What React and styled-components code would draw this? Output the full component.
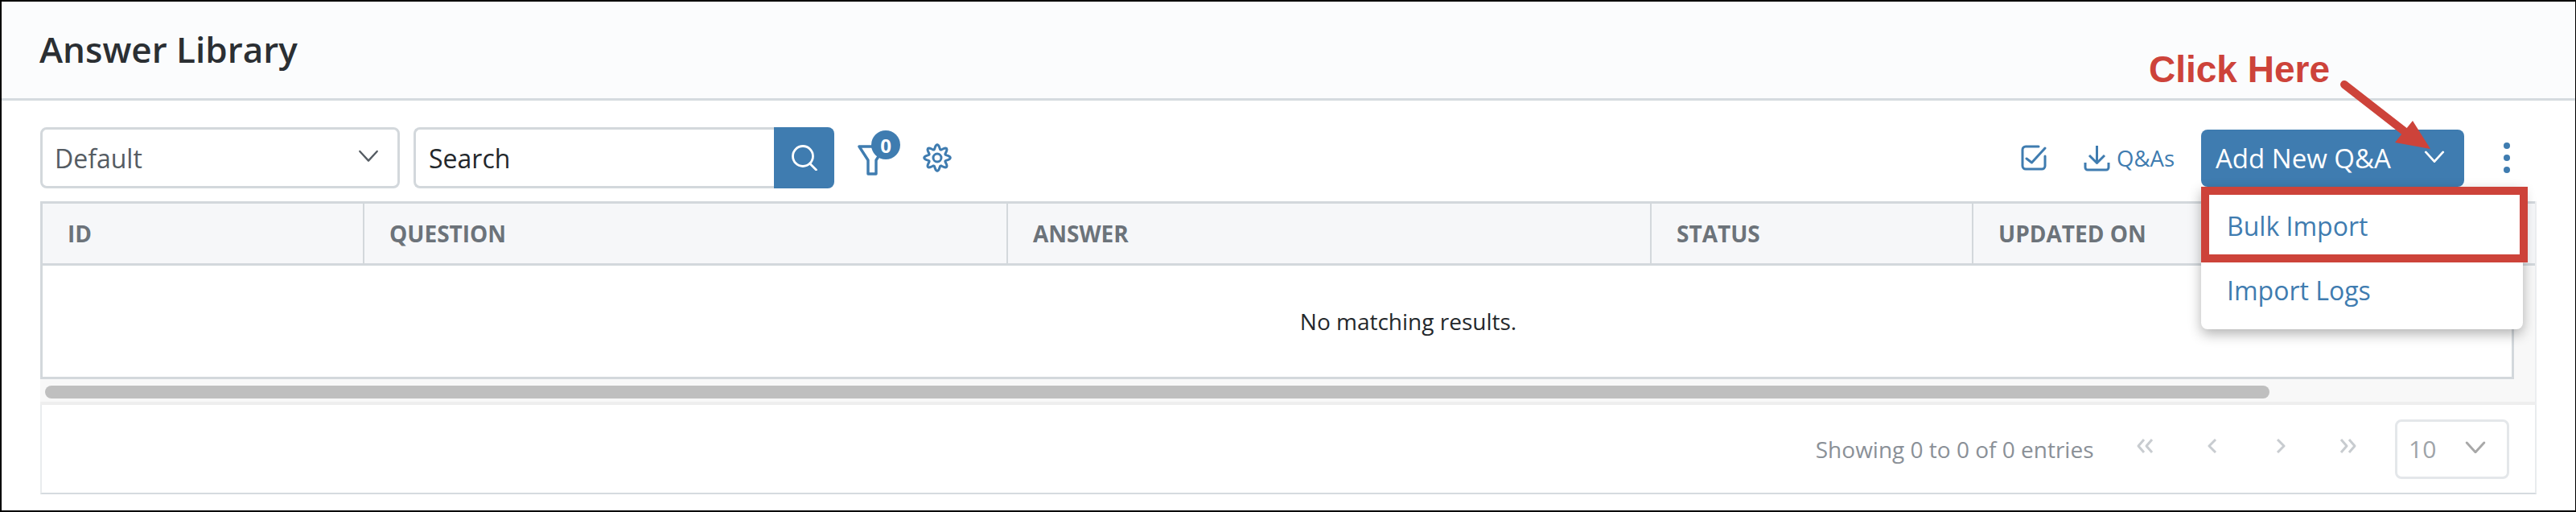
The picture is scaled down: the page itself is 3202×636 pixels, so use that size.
import styled, { createGlobalStyle } from "styled-components";

const GlobalStyle = createGlobalStyle`
  html, body {
    margin: 0;
    padding: 0;
    background: #fff;
  }
  * {
    box-sizing: border-box;
  }
`;

const blue = "#3f7cb0";
const red = "#cd433a";

const Frame = styled.div`
  width: 3202px;
  height: 636px;
  border: solid #000;
  border-width: 2px 1px 2px 2px;
  background: #fff;
  font-family: "Open Sans", "Noto Sans", sans-serif;
  overflow: hidden;
`;

const Header = styled.header`
  height: 123px;
  background: #fbfcfd;
  border-bottom: 3px solid #d5dbdf;
  padding-left: 47px;
  display: flex;
  align-items: center;
`;

const Title = styled.h1`
  margin: 0 0 2px;
  font-size: 44px;
  font-weight: 600;
  color: #2b2f33;
`;

const Content = styled.main`
  position: relative;
  padding: 33px 48px 0;
`;

const Toolbar = styled.div`
  height: 76px;
  display: flex;
  align-items: center;
`;

const SelectBox = styled.div`
  width: 447px;
  height: 76px;
  border: 3px solid #d3d8dc;
  border-radius: 8px;
  padding: 0 23px 0 15px;
  display: flex;
  align-items: center;
  justify-content: space-between;
  font-size: 32px;
  color: #555c63;
`;

const SearchGroup = styled.div`
  margin-left: 17px;
  display: flex;
`;

const SearchInput = styled.div`
  width: 448px;
  height: 76px;
  border: 3px solid #d3d8dc;
  border-right: 0;
  border-radius: 8px 0 0 8px;
  padding-left: 16px;
  display: flex;
  align-items: center;
  font-size: 32px;
  color: #23272b;
`;

const SearchButton = styled.div`
  width: 75px;
  height: 76px;
  background: ${blue};
  border-radius: 0 8px 8px 0;
  display: flex;
  align-items: center;
  justify-content: center;
`;

const FilterWrap = styled.div`
  position: relative;
  margin: 8px 0 0 29px;
  width: 36px;
  height: 40px;
`;

const Badge = styled.span`
  position: absolute;
  left: 17px;
  top: -18px;
  width: 36px;
  height: 36px;
  border-radius: 50%;
  background: ${blue};
  color: #fff;
  font-size: 24px;
  font-weight: 700;
  display: flex;
  align-items: center;
  justify-content: center;
`;

const GearWrap = styled.div`
  margin-left: 45px;
  display: flex;
`;

const Actions = styled.div`
  margin-left: auto;
  margin-right: 33px;
  display: flex;
  align-items: center;
`;

const IconLink = styled.div`
  display: flex;
  align-items: center;
  gap: 8px;
  margin-left: ${(props) => props.$gap || 0}px;
  color: ${blue};
  font-size: 27.5px;
`;

const AddButton = styled.div`
  margin: 1px 0 0 33px;
  width: 327px;
  height: 71px;
  background: ${blue};
  border-radius: 8px;
  padding: 0 24px 0 18px;
  display: flex;
  align-items: center;
  justify-content: space-between;
  color: #fff;
  font-size: 33px;
  font-weight: 500;
`;

const Kebab = styled.div`
  margin-left: 49px;
  display: flex;
  flex-direction: column;
  gap: 7px;
  span {
    width: 8px;
    height: 8px;
    border-radius: 50%;
    background: ${blue};
  }
`;

const TableCard = styled.section`
  margin-top: 16px;
  background: #f8f8f8;
  border-right: 2px solid #eceef0;
`;

const HeadRow = styled.div`
  height: 80px;
  display: grid;
  grid-template-columns: 398px 800px 800px 400px 1fr;
  background: #f6f7f9;
  border: 3px solid #d3d8dc;
  border-right: 0;
`;

const HeadCell = styled.div`
  display: flex;
  align-items: center;
  padding-left: 31px;
  font-size: 28px;
  font-weight: 700;
  color: #6c737a;
  & + & {
    border-left: 2px solid #d3d8dc;
  }
`;

const EmptyRow = styled.div`
  width: 3075px;
  height: 141px;
  padding-left: 326px;
  background: #fff;
  display: flex;
  align-items: center;
  justify-content: center;
  border: solid #d3d8dc;
  border-width: 0 3px 3px 3px;
  font-size: 28px;
  color: #24282c;
`;

const ScrollTrack = styled.div`
  height: 32px;
  padding: 8px 0 0 6px;
  border-bottom: 4px solid #eeeeee;
`;

const ScrollThumb = styled.div`
  width: 2765px;
  height: 16px;
  border-radius: 8px;
  background: #bfbfbf;
`;

const Footer = styled.footer`
  height: 111px;
  border: solid #e9ecee;
  border-width: 0 2px 2px 2px;
  border-bottom-color: #d5dbdf;
  display: flex;
  align-items: center;
  justify-content: flex-end;
  padding: 0 32px 0 0;
  color: #8a9097;
  font-size: 28px;
`;

const PagerIcons = styled.div`
  margin: 0 47px 7px 52px;
  display: flex;
  gap: 62.5px;
`;

const PageSize = styled.div`
  width: 142px;
  height: 74px;
  border: 3px solid #e4e7ea;
  border-radius: 8px;
  padding: 0 26px 0 14px;
  display: flex;
  align-items: center;
  justify-content: space-between;
  font-size: 30px;
  color: #9ea3a8;
`;

const Menu = styled.div`
  position: absolute;
  left: 2734px;
  top: 107px;
  width: 400px;
  height: 177px;
  background: #fff;
  border-radius: 0 0 8px 8px;
  box-shadow: 0 6px 16px rgba(0, 0, 0, 0.3);
`;

const MenuItem = styled.div`
  height: ${(props) => props.$tall}px;
  padding-left: 32px;
  display: flex;
  align-items: center;
  font-size: 32px;
  color: ${blue};
`;

const Highlight = styled.div`
  position: absolute;
  left: 0;
  top: 0;
  width: 406px;
  height: 94px;
  border: 10px solid ${red};
`;

const Callout = styled.div`
  position: absolute;
  left: 2671px;
  top: 60px;
  font-family: "Liberation Sans", Arial, sans-serif;
  font-size: 46px;
  font-weight: 700;
  line-height: 52px;
  color: ${red};
`;

const ArrowSvg = styled.svg`
  position: absolute;
  left: 2897px;
  top: 88px;
`;

const ChevronSvg = styled.svg`
  margin-bottom: 4px;
`;

function Chevron({ size = 26, color = "#555c63", width = 2.4 }) {
  return (
    <ChevronSvg width={size} height={size * 0.6} viewBox="0 0 26 16" fill="none">
      <path d="M2 2l11 12L24 2" stroke={color} strokeWidth={width} strokeLinecap="round" strokeLinejoin="round" />
    </ChevronSvg>
  );
}

function PagerIcon({ d }) {
  return (
    <svg width="22" height="18" viewBox="0 0 22 18" fill="none">
      <path d={d} stroke="#c8ccd0" strokeWidth="3" strokeLinejoin="round" />
    </svg>
  );
}

// eight rounded lobes, same shape as the cog in the toolbar
function gearPath() {
  const points = [];
  for (let i = 0; i < 96; i++) {
    const angle = (i / 96) * Math.PI * 2;
    const radius = 13.5 + 2.8 * Math.cos(angle * 8);
    const x = 18 + radius * Math.sin(angle);
    const y = 18 - radius * Math.cos(angle);
    points.push(`${x.toFixed(2)} ${y.toFixed(2)}`);
  }
  return `M${points.join("L")}Z`;
}

function App() {
  return (
    <Frame>
      <GlobalStyle />
      <Header>
        <Title>Answer Library</Title>
      </Header>
      <Content>
        <Toolbar>
          <SelectBox>
            Default
            <Chevron />
          </SelectBox>
          <SearchGroup>
            <SearchInput>Search</SearchInput>
            <SearchButton>
              <svg width="32" height="32" viewBox="0 0 32 32" fill="none" stroke="#fff" strokeWidth="2.8" strokeLinecap="round">
                <circle cx="14" cy="14" r="12.5" />
                <path d="M23 23.5l7.5 7.5" />
              </svg>
            </SearchButton>
          </SearchGroup>
          <FilterWrap>
            <svg width="36" height="38" viewBox="0 0 36 38" fill="none" stroke={blue} strokeWidth="3.4" strokeLinejoin="round">
              <path d="M2 2h32L23 19v17H13V19z" />
            </svg>
            <Badge>0</Badge>
          </FilterWrap>
          <GearWrap>
            <svg width="36" height="36" viewBox="0 0 36 36" fill="none" stroke={blue} strokeWidth="3" strokeLinejoin="round">
              <path d={gearPath()} />
              <circle cx="18" cy="18" r="5" />
            </svg>
          </GearWrap>
          <Actions>
            <IconLink>
              <svg width="32" height="32" viewBox="0 0 32 32" fill="none" stroke={blue} strokeWidth="3" strokeLinecap="round" strokeLinejoin="round">
                <path d="M22 2H6a4 4 0 0 0-4 4v20a4 4 0 0 0 4 4h20a4 4 0 0 0 4-4V14" />
                <path d="M7 17l6.5 5L30 4" />
              </svg>
            </IconLink>
            <IconLink $gap={46}>
              <svg width="33" height="33" viewBox="0 0 33 33" fill="none" stroke={blue} strokeWidth="3" strokeLinejoin="round">
                <path d="M16.5 1v21M7 13l9.5 9.5L26 13" />
                <path d="M2 22v6a3 3 0 0 0 3 3h23a3 3 0 0 0 3-3v-6" />
              </svg>
              Q&amp;As
            </IconLink>
            <AddButton>
              Add New Q&amp;A
              <Chevron color="#fff" size={26} width={2.8} />
            </AddButton>
            <Kebab>
              <span />
              <span />
              <span />
            </Kebab>
          </Actions>
        </Toolbar>
        <TableCard>
          <HeadRow>
            <HeadCell>ID</HeadCell>
            <HeadCell>QUESTION</HeadCell>
            <HeadCell>ANSWER</HeadCell>
            <HeadCell>STATUS</HeadCell>
            <HeadCell>UPDATED ON</HeadCell>
          </HeadRow>
          <EmptyRow>No matching results.</EmptyRow>
          <ScrollTrack>
            <ScrollThumb />
          </ScrollTrack>
        </TableCard>
        <Footer>
          Showing 0 to 0 of 0 entries
          <PagerIcons>
            <PagerIcon d="M10 1L3 9l7 8M20 1l-7 8 7 8" />
            <PagerIcon d="M15 1L7 9l8 8" />
            <PagerIcon d="M7 1l8 8-8 8" />
            <PagerIcon d="M2 1l7 8-7 8M12 1l7 8-7 8" />
          </PagerIcons>
          <PageSize>
            10
            <Chevron size={26} color="#a8a8a8" width={3} />
          </PageSize>
        </Footer>
        <Menu>
          <MenuItem $tall={97}>Bulk Import</MenuItem>
          <MenuItem $tall={63}>Import Logs</MenuItem>
          <Highlight />
        </Menu>
      </Content>
      <Callout>Click Here</Callout>
      <ArrowSvg width="130" height="100" viewBox="0 0 130 100">
        <path d="M17 17L98 80" stroke={red} strokeWidth="10" strokeLinecap="round" fill="none" />
        <path d="M124 97L102 62l-22 27z" fill={red} />
      </ArrowSvg>
    </Frame>
  );
}

export default App;
